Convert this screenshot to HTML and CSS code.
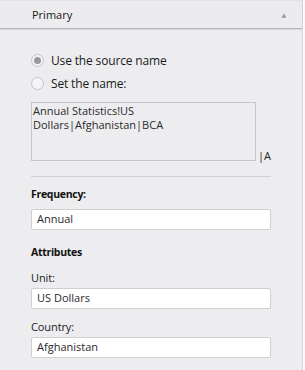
FILE: index.html
```html
<!DOCTYPE html>
<html lang="en">
<head>
    <meta charset="UTF-8">
    <title>Primary</title>
    <link rel="stylesheet" href="styles.css">
</head>
<body>
    <div class="panel">
        <!-- section header -->
        <div class="panel-header">
            <span class="panel-title">Primary</span>
            <span class="panel-arrow">&#9650;</span>
        </div>

        <div class="panel-body">
            <div class="radio-row">
                <span class="radio checked"></span>
                <span class="radio-label">Use the source name</span>
            </div>
            <div class="radio-row">
                <span class="radio"></span>
                <span class="radio-label">Set the name:</span>
            </div>

            <div class="name-row">
                <div class="name-box">Annual Statistics!US Dollars|Afghanistan|BCA</div>
                <span class="name-tail">|A</span>
            </div>

            <div class="divider"></div>

            <div class="field-title">Frequency:</div>
            <div class="input input-freq">Annual</div>

            <div class="field-title attrs">Attributes</div>

            <div class="field-label">Unit:</div>
            <div class="input">US Dollars</div>

            <div class="field-label">Country:</div>
            <div class="input">Afghanistan</div>
        </div>
    </div>
</body>
</html>
```

FILE: styles.css
```css
:root {
    --bg: #ededef;
    --text: #222;
    --line: #d2d2d4;
    --input-border: #d0d0d4;
}

body {
    margin: 0;
    padding: 0;
    background: #fff;
    font-family: "Open Sans", "DejaVu Sans", sans-serif;
    font-size: 11px;
    color: var(--text);
}

.panel {
    width: 302px;
    height: 370px;
    background: var(--bg);
    border-right: 1px solid #d4d4d6;
}

/* header */
.panel-header {
    height: 27px;
    display: flex;
    align-items: center;
    justify-content: space-between;
    padding: 0 16px 0 32px;
    border-top: 1px solid #e2e2e4;
    border-bottom: 1px solid #b4b4b6;
    box-shadow: 0 1px 1px rgba(0,0,0,0.08);
    background: #ececee;
}

.panel-title {
    font-size: 11px;
    color: #1a1a1a;
    margin-top: -1px;
}

.panel-arrow {
    font-size: 6px;
    color: #999;
}

/* body */
.panel-body {
    padding: 24px 31px 0 31px;
}

.radio-row {
    display: flex;
    align-items: center;
    gap: 7px;
    height: 14px;
    margin-bottom: 9px;
}

.radio {
    width: 11px;
    height: 11px;
    border: 1px solid #c4c4c6;
    border-radius: 50%;
    background: #f4f4f6;
    position: relative;
}

.radio.checked::after {
    content: "";
    position: absolute;
    left: 2px;
    top: 2px;
    width: 7px;
    height: 7px;
    border-radius: 50%;
    background: #9a9a9c;
}

.radio-label {
    font-size: 12px;
    color: #1a1a1a;
    letter-spacing: -0.15px;
}

.name-row {
    display: flex;
    align-items: flex-end;
    margin-top: 12px;
}

.name-box {
    width: 221px;
    height: 56px;
    border: 1px solid #c6c6c8;
    padding: 1px 1px 0 1px;
    font-size: 11px;
    line-height: 14px;
    color: #2a2a2a;
}

.name-tail {
    margin-left: 2px;
    line-height: 14px;
    margin-bottom: -2px;
}

.divider {
    height: 1px;
    width: 240px;
    background: var(--line);
    margin-top: 15px;
}

.field-title {
    font-weight: 700;
    font-size: 10.5px;
    letter-spacing: -0.3px;
    margin-top: 10px;
    height: 15px;
    line-height: 15px;
    color: #111;
}

.field-title.attrs {
    margin-top: 15px;
}

.field-label {
    font-size: 11px;
    margin-top: 10px;
    height: 15px;
    line-height: 15px;
    letter-spacing: -0.1px;
}

.input {
    box-sizing: border-box;
    width: 240px;
    height: 21px;
    margin-top: 3px;
    background: #fff;
    border: 1px solid var(--input-border);
    border-radius: 2px;
    padding: 0 5px;
    line-height: 17px;
    font-size: 11px;
    color: #2a2a2a;
}

.input-freq {
    margin-top: 7px;
}
```
